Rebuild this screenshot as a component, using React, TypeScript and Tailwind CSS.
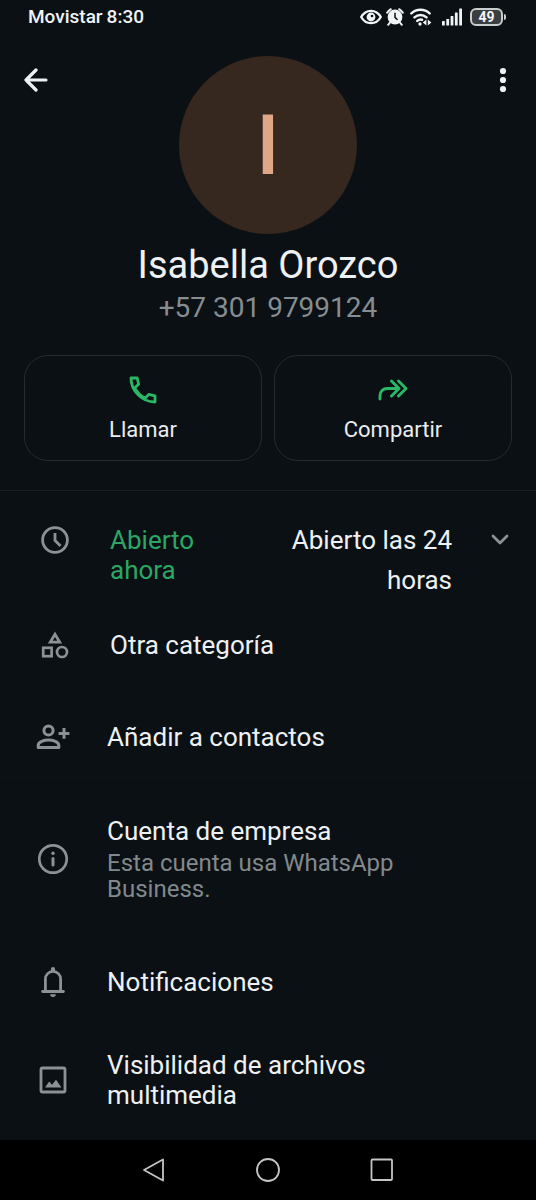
import React from 'react';

interface IconProps {
  className?: string;
}

const EyeIcon: React.FC<IconProps> = ({ className }) => (
  <svg viewBox="0 0 22 16" className={className} fill="none">
    <path d="M1.2 8C3.4 4 7 1.8 11 1.8S18.600 4 20.800 8C18.600 12 15 14.200 11 14.200S3.400 12 1.200 8Z" stroke="currentColor" strokeWidth="2.300" />
    <circle cx="11" cy="8" r="4.400" fill="currentColor" />
    <circle cx="12" cy="7" r="1.300" fill="#0b1014" />
  </svg>
);

const AlarmIcon: React.FC<IconProps> = ({ className }) => (
  <svg viewBox="0 0 18 18" className={className} fill="none">
    <circle cx="9" cy="9" r="7.400" fill="currentColor" />
    <path d="M1.200 4.600A14 14 0 0 1 4.800 1.200M16.800 4.600A14 14 0 0 0 13.200 1.200M4 14.500L2.200 16.800M14 14.500L15.800 16.800" stroke="currentColor" strokeWidth="2" strokeLinecap="round" />
    <path d="M9 4.800V9.400L11.500 11.800" stroke="#0b1014" strokeWidth="1.500" />
  </svg>
);

const WifiIcon: React.FC<IconProps> = ({ className }) => (
  <svg viewBox="0 0 22 18" className={className} fill="none">
    <path d="M1.400 5.400A13.200 13.200 0 0 1 19.600 5.400M4.500 9.400A8.900 8.900 0 0 1 16.500 9.400M7.300 12.900A5 5 0 0 1 12 11.800" stroke="currentColor" strokeWidth="2.500" strokeLinecap="round" />
    <circle cx="10" cy="16" r="1.700" fill="currentColor" />
    <path d="M16.400 11.500V17.500L12.800 14.500ZM17.800 11.500V17.500L21.400 14.500Z" fill="currentColor" />
  </svg>
);

const SignalIcon: React.FC<IconProps> = ({ className }) => (
  <svg viewBox="0 0 20 18" className={className} fill="currentColor">
    <rect x="0" y="13" width="2.800" height="4.500" rx="0.500" />
    <rect x="4.300" y="11" width="2.800" height="6.500" rx="0.500" />
    <rect x="8.600" y="8" width="2.800" height="9.500" rx="0.500" />
    <rect x="12.900" y="4.500" width="2.800" height="13" rx="0.500" />
    <rect x="17.200" y="0.500" width="2.800" height="17" rx="0.500" />
  </svg>
);

const BackIcon: React.FC<IconProps> = ({ className }) => (
  <svg viewBox="0 0 24 24" className={className} fill="none" stroke="currentColor" strokeWidth="3.200" strokeLinecap="round" strokeLinejoin="round">
    <path d="M22 12H2M12 2L2 12L12 22" />
  </svg>
);

const MoreIcon: React.FC<IconProps> = ({ className }) => (
  <svg viewBox="0 0 26 26" className={className} fill="currentColor">
    <circle cx="13" cy="4" r="3.100" />
    <circle cx="13" cy="13" r="3.100" />
    <circle cx="13" cy="22" r="3.100" />
  </svg>
);

const CallIcon: React.FC<IconProps> = ({ className }) => (
  <svg viewBox="0 0 28 28" className={className} fill="none" stroke="currentColor" strokeWidth="2.800" strokeLinejoin="round">
    <path d="M2 2H8.200L9.600 8.200L5.800 11.800C8 16 11.800 20 16.200 22.200L19.800 18.400L26 19.800V26C13 26 2 15 2 2Z" />
  </svg>
);

const ForwardIcon: React.FC<IconProps> = ({ className }) => (
  <svg viewBox="0 0 30 22" className={className} fill="none" stroke="currentColor" strokeWidth="2.900" strokeLinecap="round" strokeLinejoin="round">
    <path d="M2 20V16.500A7 7 0 0 1 9 9.500H20M13.500 2L21 9.500L13.500 17M20.500 2L28 9.500L20.500 17" />
  </svg>
);

const ClockIcon: React.FC<IconProps> = ({ className }) => (
  <svg viewBox="0 0 28 28" className={className} fill="none" stroke="currentColor" strokeWidth="2.800">
    <circle cx="14" cy="14" r="12.400" />
    <path d="M14 7V14.500L19.500 20" />
  </svg>
);

const CategoryIcon: React.FC<IconProps> = ({ className }) => (
  <svg viewBox="0 0 28 28" className={className} fill="none" stroke="currentColor" strokeWidth="2.700">
    <path d="M14 3.200L18.800 11.200H9.200Z" />
    <rect x="2.200" y="16.800" width="8.400" height="8.400" />
    <circle cx="21" cy="21" r="5" />
  </svg>
);

const AddContactIcon: React.FC<IconProps> = ({ className }) => (
  <svg viewBox="0 0 34 28" className={className} fill="none" stroke="currentColor" strokeWidth="3">
    <circle cx="12.500" cy="7.500" r="4.600" />
    <path d="M2.200 24.500V22.500C2.200 18.800 8 17 12.500 17S22.800 18.800 22.800 22.500V24.500Z" strokeLinejoin="round" />
    <path d="M28 5V15.800M22.600 10.400H33.400" />
  </svg>
);

const InfoIcon: React.FC<IconProps> = ({ className }) => (
  <svg viewBox="0 0 32 32" className={className} fill="none" stroke="currentColor">
    <circle cx="16" cy="16" r="13.700" strokeWidth="2.700" />
    <path d="M16 15.500V22" strokeWidth="3" strokeLinecap="round" />
    <circle cx="16" cy="10.200" r="1.700" fill="currentColor" stroke="none" />
  </svg>
);

const BellIcon: React.FC<IconProps> = ({ className }) => (
  <svg viewBox="0 0 32 32" className={className} fill="none" stroke="currentColor" strokeWidth="2.800">
    <path d="M8.400 25.500V13A7.600 7.600 0 0 1 23.600 13V25.500" />
    <path d="M5.600 25.500H26.400" strokeLinecap="round" />
    <path d="M13.900 5V3A2.100 2.100 0 0 1 18.100 3V5ZM13.200 28.200H18.800A2.800 2.800 0 0 1 13.200 28.200Z" fill="currentColor" stroke="none" />
  </svg>
);

const ImageIcon: React.FC<IconProps> = ({ className }) => (
  <svg viewBox="0 0 32 32" className={className} fill="none">
    <rect x="4" y="4" width="24" height="24" rx="1.500" stroke="currentColor" strokeWidth="2.800" />
    <path d="M8 23.500L12.200 17.500L15 20.800L19 15.800L24.500 23.500Z" fill="currentColor" />
  </svg>
);

const ChevronIcon: React.FC<IconProps> = ({ className }) => (
  <svg viewBox="0 0 18 12" className={className} fill="none" stroke="currentColor" strokeWidth="2.800" strokeLinecap="round" strokeLinejoin="round">
    <path d="M2 2L9 9L16 2" />
  </svg>
);

const StatusBar: React.FC = () => (
  <div className="flex h-[34px] items-center justify-between pl-7 pr-[30px] text-[#f0f4f6]">
    <div className="flex items-center gap-1 text-[19px] font-medium">
      <span>Movistar</span>
      <span>8:30</span>
    </div>
    <div className="flex items-center">
      <EyeIcon className="mr-1 h-4 w-[22px]" />
      <AlarmIcon className="mr-1.5 h-[18px] w-[18px]" />
      <WifiIcon className="mr-2.5 h-[18px] w-[22px]" />
      <SignalIcon className="mr-2 h-[18px] w-5" />
      <div className="flex h-[18px] w-[33px] items-center justify-center rounded-md border-2 border-[#c9cccd] bg-[#3a3e41] text-sm font-bold">
        49
      </div>
      <div className="ml-px h-1.5 w-0.5 rounded-r bg-[#c9cccd]" />
    </div>
  </div>
);

interface ActionButtonProps {
  icon: React.ReactNode;
  label: string;
}

const ActionButton: React.FC<ActionButtonProps> = ({ icon, label }) => (
  <button className="flex h-[106px] flex-1 flex-col items-center rounded-3xl border border-[#262b2f] pt-[18px]">
    <span className="flex h-8 items-center">{icon}</span>
    <span className="mt-2.5 text-[22px] leading-7 text-[#e9edef]">{label}</span>
  </button>
);

interface RowProps {
  icon: React.ReactNode;
  title: string;
  subtitle?: string;
  className?: string;
}

const Row: React.FC<RowProps> = ({ icon, title, subtitle, className = '' }) => (
  <button className={`flex w-full items-center gap-[38px] pl-[37px] pr-24 text-left ${className}`}>
    <span className="flex w-8 shrink-0 justify-center text-[#8b9295]">{icon}</span>
    <span className="flex flex-col gap-1">
      <span className="text-[26px] leading-[30px]">{title}</span>
      {subtitle && <span className="text-2xl leading-[26px] text-[#82898d]">{subtitle}</span>}
    </span>
  </button>
);

const App: React.FC = () => {
  return (
    <div className="flex min-h-screen flex-col bg-[#0b1014] font-['Roboto',sans-serif] text-[#eef1f3]">
      <StatusBar />

      <header className="flex items-start justify-between px-5 pt-[22px]">
        <button className="flex h-12 w-8 items-center justify-center" aria-label="Atrás">
          <BackIcon className="h-6 w-6" />
        </button>
        <div className="flex h-[178px] w-[178px] items-center justify-center rounded-full bg-[#36271f] pt-0.5 text-[84px] font-medium text-[#dfa788]">
          I
        </div>
        <button className="flex h-12 w-8 items-center justify-end" aria-label="Más opciones">
          <MoreIcon className="h-[26px] w-[26px]" />
        </button>
      </header>

      <div className="mt-2.5 text-center">
        <h1 className="text-[38px] leading-[42px]">Isabella Orozco</h1>
        <p className="mt-1 text-[28px] leading-9 text-[#868d91]">+57 301 9799124</p>
      </div>

      <div className="mt-[29px] flex gap-3 px-6">
        <ActionButton icon={<CallIcon className="h-7 w-7 text-[#2bb866]" />} label="Llamar" />
        <ActionButton icon={<ForwardIcon className="h-[22px] w-[30px] text-[#2bb866]" />} label="Compartir" />
      </div>

      <main className="mt-[29px] border-t border-[#1a1f23] pt-[29px]">
        <button className="flex w-full items-start gap-[39px] pl-[39px] pr-[27px] text-left text-[26px]">
          <span className="flex h-10 w-8 shrink-0 items-center justify-center text-[#8b9295]">
            <ClockIcon className="h-7 w-7" />
          </span>
          <span className="flex flex-1 items-start">
            <span className="w-28 shrink-0 pt-[5px] leading-[30px] text-[#2ba765]">Abierto ahora</span>
            <span className="ml-auto max-w-[204px] text-right leading-10">Abierto las 24 horas</span>
          </span>
          <span className="flex h-10 items-center text-[#8b9295]">
            <ChevronIcon className="h-3 w-[18px]" />
          </span>
        </button>

        <div className="mt-[30px] flex items-center gap-[39px] pl-[39px]">
          <span className="flex w-8 shrink-0 justify-center text-[#8b9295]">
            <CategoryIcon className="h-7 w-7" />
          </span>
          <span className="text-[26px] leading-[30px]">Otra categoría</span>
        </div>

        <Row
          icon={<AddContactIcon className="h-7 w-[34px] shrink-0" />}
          title="Añadir a contactos"
          className="mt-9 h-[82px] border-b border-[#0e1317]"
        />
        <Row
          icon={<InfoIcon className="h-8 w-8" />}
          title="Cuenta de empresa"
          subtitle="Esta cuenta usa WhatsApp Business."
          className="py-[38px]"
        />
        <Row icon={<BellIcon className="h-8 w-8" />} title="Notificaciones" className="py-[26px]" />
        <Row
          icon={<ImageIcon className="h-8 w-8" />}
          title="Visibilidad de archivos multimedia"
          className="pt-[26px] pb-[30px]"
        />
      </main>

      <nav className="mt-auto flex h-[60px] items-center justify-center gap-[90px] bg-black text-[#c4c4c4]">
        <button aria-label="Volver">
          <svg viewBox="0 0 24 24" className="h-6 w-6" fill="none" stroke="currentColor" strokeWidth="1.800" strokeLinejoin="round">
            <path d="M21 1.500V22.500L2 12Z" />
          </svg>
        </button>
        <button aria-label="Inicio">
          <svg viewBox="0 0 24 24" className="h-6 w-6" fill="none" stroke="currentColor" strokeWidth="1.800">
            <circle cx="12" cy="12" r="11" />
          </svg>
        </button>
        <button aria-label="Recientes">
          <svg viewBox="0 0 24 24" className="h-6 w-6" fill="none" stroke="currentColor" strokeWidth="1.800">
            <rect x="1.500" y="1.500" width="20.500" height="20.500" rx="1" />
          </svg>
        </button>
      </nav>
    </div>
  );
};

export default App;
